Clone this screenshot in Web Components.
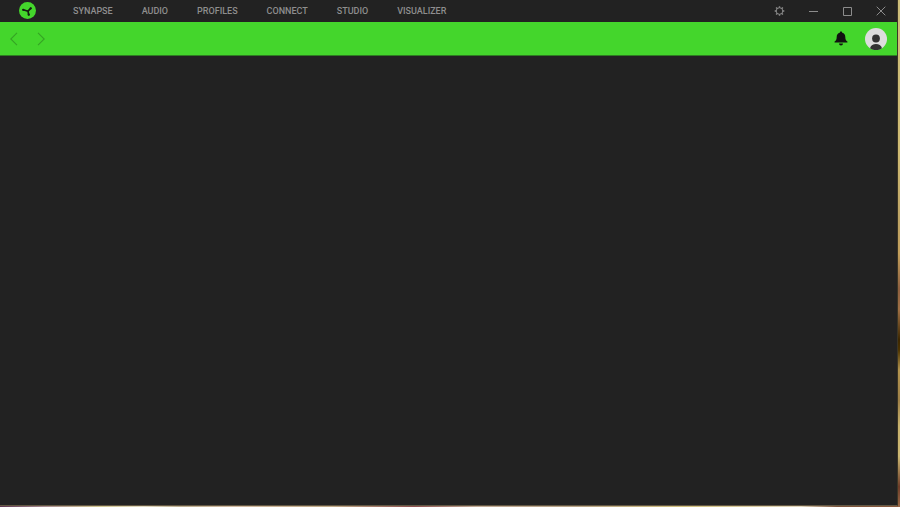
<!DOCTYPE html>
<html lang="en">
<head>
<meta charset="utf-8">
<title>Synapse</title>
<style>
html, body { height: 100%; margin: 0; }
body { font-family: Roboto, "Liberation Sans", sans-serif; }
</style>
</head>
<body>
<app-desktop>
  <app-window>
    <title-bar slot="title">
      <nav-tab>SYNAPSE</nav-tab>
      <nav-tab>AUDIO</nav-tab>
      <nav-tab>PROFILES</nav-tab>
      <nav-tab>CONNECT</nav-tab>
      <nav-tab>STUDIO</nav-tab>
      <nav-tab>VISUALIZER</nav-tab>
    </title-bar>
    <tool-bar slot="tools"></tool-bar>
  </app-window>
</app-desktop>
<script>
function define(name, html) {
  const template = document.createElement('template');
  template.innerHTML = html;
  customElements.define(name, class extends HTMLElement {
    constructor() {
      super();
      this.attachShadow({ mode: 'open' }).append(template.content.cloneNode(true));
    }
  });
}

/* Desktop: the wallpaper shows as a thin rim to the right of and below the window. */
define('app-desktop', `
<style>
:host {
  display: grid; height: 100%; box-sizing: border-box; padding: 0 2px 1px 0;
  background:
    linear-gradient(180deg, #cdbe7b 0%, #d0bc74 30%, #bfa566 43%, #c4a05c 50%, #8f6040 57%, #a07045 61%, #3e2800 67%, #4e3400 69%, #b4954f 73%, #a08148 79%, #c9b36e 84%, #cdb873 90%, #6e3c28 96%, #9a6a48 100%) right / 2px 100% no-repeat,
    linear-gradient(90deg, #5d3650 0%, #a98c92 5%, #d0c690 11%, #e0d8c0 16%, #bcae90 20%, #d2baa2 26%, #c0aa88 37%, #8e5050 46%, #c3ac98 53%, #b8a488 64%, #d0c07e 76%, #e0d5bc 89%, #7c543c 93%, #8a5a3e 100%);
}
</style>
<slot></slot>`);

define('app-window', `
<style>
:host {
  display: flex; flex-direction: column; min-width: 0; box-sizing: border-box;
  background: #222; border: solid #3c3626; border-width: 0 1px 1px 0;
  border-bottom-color: #645844;
}
main { flex: 1; }
</style>
<slot name="title"></slot>
<slot name="tools"></slot>
<main></main>`);

define('nav-tab', `
<style>
:host { display: block; }
button {
  display: block; margin: 0; padding: 0; border: 0; background: none;
  color: #8e8e8e; font: 500 9px/22px Roboto, "Liberation Sans", sans-serif;
}
</style>
<button type="button"><slot></slot></button>`);

define('title-bar', `
<style>
:host { display: flex; align-items: center; height: 22px; color: #8c8c8c; }
.logo { display: block; width: 18px; height: 18px; margin: 0 36px 0 19px; }
nav { display: flex; gap: 29px; flex: 1; }
.controls { display: flex; gap: 2px; }
button { display: grid; place-items: center; width: 32px; height: 22px; padding: 0; border: 0; background: none; color: inherit; }
svg { display: block; fill: none; stroke: currentColor; }
</style>
<svg class="logo" viewBox="0 0 18 18" role="img" aria-label="Home">
  <circle cx="8.5" cy="8.5" r="8.5" fill="#44d62c" stroke="none"/>
  <g stroke="#151c13" stroke-linecap="round">
    <path d="M9 9.2 4.3 7.8M9 9.2l2.7-2.9M9 9.2l.7 3.5" stroke-width="1.7"/>
    <path d="M4.2 7.8h.1M11.7 6.3h.1M9.7 12.7h.1" stroke-width="2.2"/>
  </g>
</svg>
<nav><slot></slot></nav>
<div class="controls">
  <button type="button" aria-label="Settings"><svg width="12" height="12" viewBox="0 0 12 12"><circle cx="6.5" cy="6" r="3.3"/><path d="M6.5 1.2v1.5M6.5 9.3v1.5M1.700 6h1.500M9.800 6h1.500M3.100 2.600l1 1M8.900 8.400l1 1M9.900 2.600l-1 1M4.100 8.400l-1 1" stroke-width="1.4"/></svg></button>
  <button type="button" aria-label="Minimize"><svg width="10" height="10" viewBox="0 0 10 10"><path d="M1 5.5h9"/></svg></button>
  <button type="button" aria-label="Maximize"><svg width="10" height="10" viewBox="0 0 10 10"><path d="M1.5 1.5h8v8h-8z"/></svg></button>
  <button type="button" aria-label="Close"><svg width="10" height="10" viewBox="0 0 10 10"><path d="m.7.7 8.600 8.600M9.300.7.7 9.300"/></svg></button>
</div>`);

define('tool-bar', `
<style>
:host {
  display: flex; align-items: center; justify-content: space-between;
  height: 34px; box-sizing: border-box; padding: 0 10px 0 9px;
  background: #44d62c; border-bottom: 1px solid #2e7d22;
}
div { display: flex; align-items: center; }
.history { gap: 17px; }
.account { gap: 16px; }
button { display: block; padding: 0; border: 0; background: none; color: #35a424; }
svg { display: block; }
</style>
<div class="history">
  <button type="button" aria-label="Back"><svg width="10" height="14" viewBox="0 0 10 14" fill="none" stroke="currentColor" stroke-width="1.1"><path d="M8 .8 1.800 7 8 13.200"/></svg></button>
  <button type="button" aria-label="Forward"><svg width="10" height="14" viewBox="0 0 10 14" fill="none" stroke="currentColor" stroke-width="1.1"><path d="M2 .8 8.200 7 2 13.200"/></svg></button>
</div>
<div class="account">
  <button type="button" aria-label="Notifications"><svg width="16" height="16" viewBox="0 0 16 16" fill="#111"><path d="M8 .6c.8 0 1.200.5 1.200 1.200 2.100.6 3.100 2.100 3.100 4.100 0 2.500.6 3.400 2 4.700.4.500.2 1-.4 1H2.100c-.6 0-.8-.5-.4-1 1.400-1.300 2-2.200 2-4.700 0-2 1-3.500 3.100-4.100C6.800 1.100 7.200.6 8 .6zM6 12.600h4a2 2 0 0 1-4 0z"/></svg></button>
  <button type="button" aria-label="Account"><svg width="22" height="22" viewBox="0 0 22 22"><circle cx="11" cy="11" r="11" fill="#ddd"/><g fill="#333"><circle cx="11" cy="10.500" r="3.900"/><path d="M5 20.200c.8-3.200 3.200-4.300 6-4.300s5.200 1.100 6 4.300A11 11 0 0 1 5 20.200z"/></g></svg></button>
</div>`);
</script>
</body>
</html>
